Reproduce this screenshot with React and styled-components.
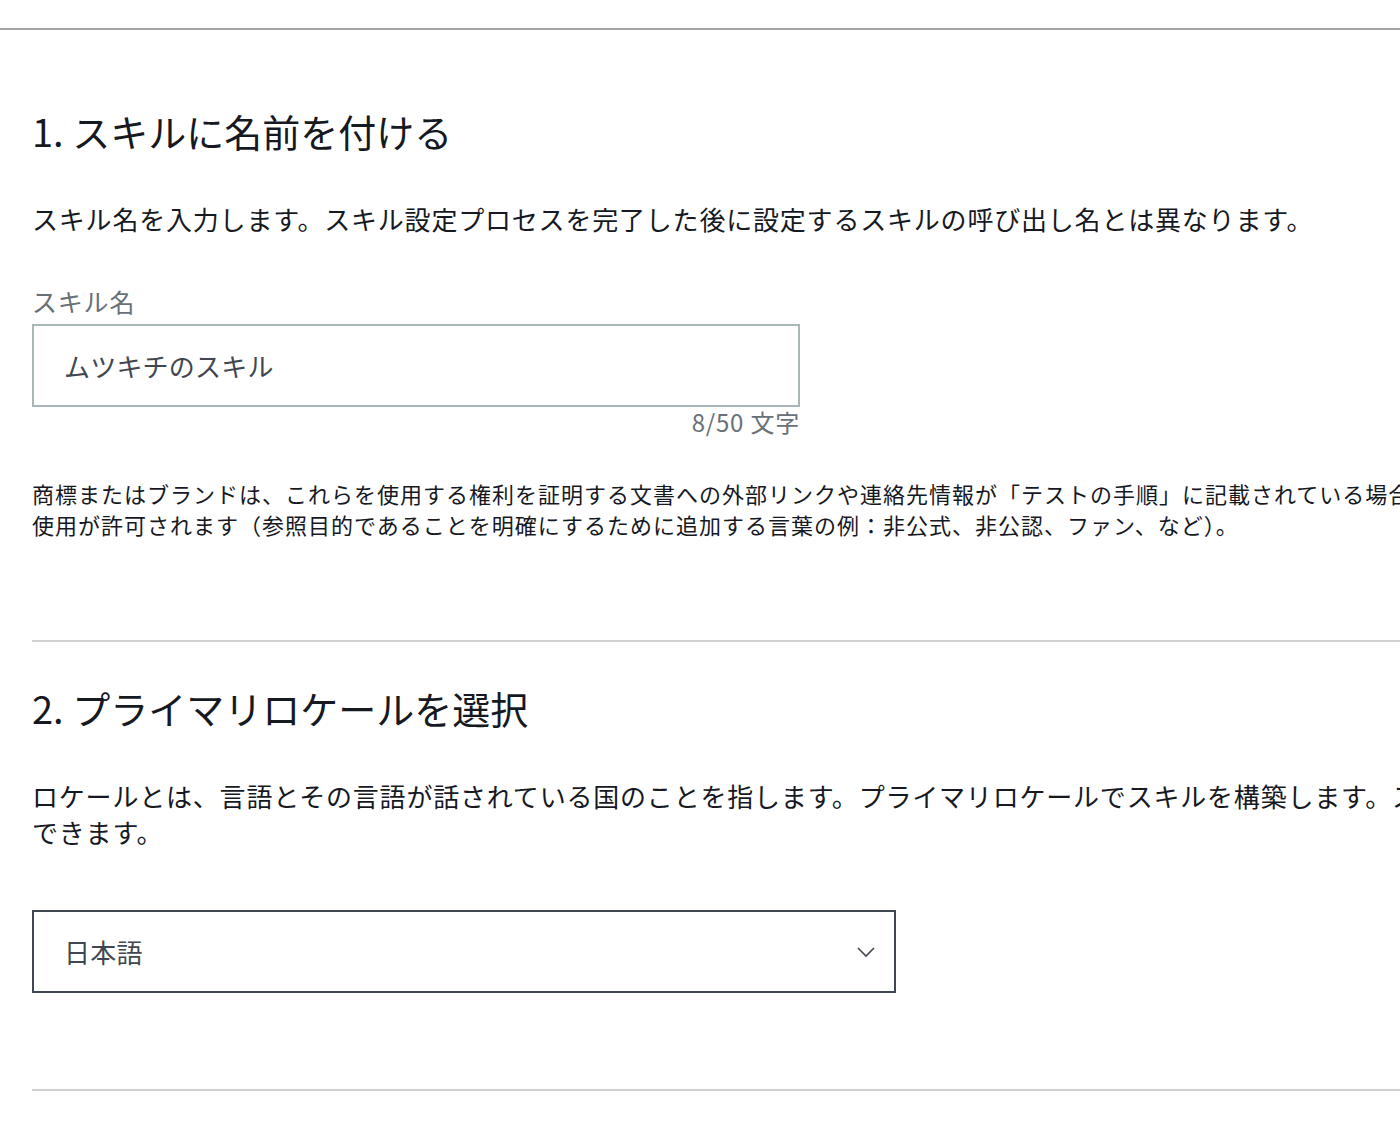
import React from "react";
import styled, { createGlobalStyle } from "styled-components";

const Global = createGlobalStyle`
  html, body { margin: 0; padding: 0; background: #fff; overflow: hidden; }
  body { font-family: "Noto Sans CJK JP", "Noto Sans", sans-serif; color: #16191f; }
`;

const Page = styled.div`
  width: 1400px;
  overflow: hidden;
  padding-top: 28px;
`;

const TopRule = styled.div`
  height: 2px;
  background: #a3a3a3;
`;

const Content = styled.div`
  width: 1500px;
  padding-left: 32px;
`;

const Section = styled.section`
  padding-top: ${(p) => p.$top}px;
  padding-bottom: ${(p) => p.$bottom}px;
  border-bottom: 2px solid #d0d0d0;
`;

const Heading = styled.h2`
  margin: 0;
  font-size: 38px;
  font-weight: 400;
  line-height: 48px;
  letter-spacing: 0;
  color: #16191f;
`;

const Description = styled.p`
  margin: ${(p) => p.$mt}px 0 0;
  font-size: 26px;
  line-height: 36px;
  letter-spacing: 0.8px;
  white-space: nowrap;
  color: #16191f;
`;

const Label = styled.div`
  margin-top: 48px;
  font-size: 25px;
  line-height: 32px;
  letter-spacing: 0.8px;
  color: #687078;
`;

const FieldBox = styled.div`
  box-sizing: border-box;
  width: ${(p) => p.$w}px;
  height: 83px;
  margin-top: ${(p) => p.$mt}px;
  display: flex;
  align-items: center;
  justify-content: space-between;
  padding: 0 18px 0 30px;
  border: ${(p) => (p.$dark ? "2px solid #414750" : "2px solid #aab7b8")};
  font-size: 26px;
  letter-spacing: 0.2px;
  color: #414750;
`;

const Counter = styled.div`
  width: 768px;
  text-align: right;
  font-size: 24px;
  line-height: 30px;
  letter-spacing: 0.8px;
  color: #687078;
`;

const Small = styled.p`
  margin: 41px 0 0;
  font-size: 22px;
  line-height: 31px;
  letter-spacing: 1px;
  white-space: nowrap;
  color: #16191f;
`;

const Chevron = () => (
  <svg width="20" height="14" viewBox="0 0 20 14" fill="none">
    <path d="M2 3 L10 11 L18 3" stroke="#414750" strokeWidth="1.6" />
  </svg>
);

export default function App() {
  return (
    <>
      <Global />
      <Page>
        <TopRule />
        <Content>
          <Section $top={77} $bottom={100}>
            <Heading>1. スキルに名前を付ける</Heading>
            <Description $mt={46}>
              スキル名を入力します。スキル設定プロセスを完了した後に設定するスキルの呼び出し名とは異なります。
            </Description>
            <Label>スキル名</Label>
            <FieldBox $w={768} $mt={7}>ムツキチのスキル</FieldBox>
            <Counter>8/50 文字</Counter>
            <Small>
              商標またはブランドは、これらを使用する権利を証明する文書への外部リンクや連絡先情報が「テストの手順」に記載されている場合に限り、
              <br />
              使用が許可されます（参照目的であることを明確にするために追加する言葉の例：非公式、非公認、ファン、など）。
            </Small>
          </Section>
          <Section $top={42} $bottom={96}>
            <Heading>2. プライマリロケールを選択</Heading>
            <Description $mt={46}>
              ロケールとは、言語とその言語が話されている国のことを指します。プライマリロケールでスキルを構築します。スキルの作成後に別のロケールを追加
              <br />
              できます。
            </Description>
            <FieldBox $w={864} $mt={60} $dark>
              <span>日本語</span>
              <Chevron />
            </FieldBox>
          </Section>
        </Content>
      </Page>
    </>
  );
}
